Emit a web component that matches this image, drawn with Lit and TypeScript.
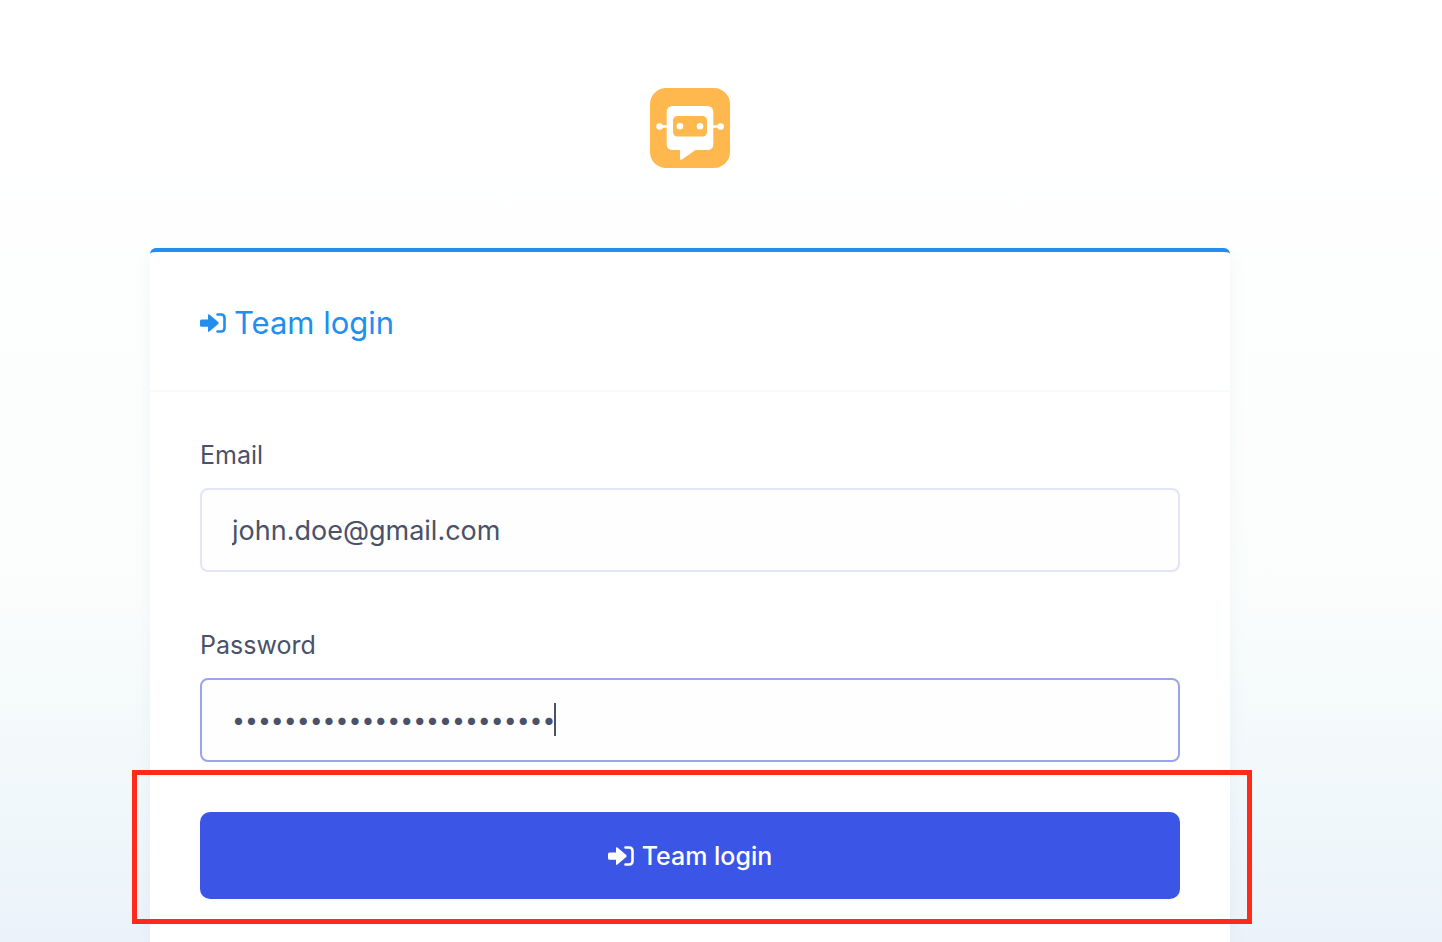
import { LitElement, html, css, svg } from "lit";
import { customElement } from "lit/decorators.js";

const loginIcon = html`<svg class="icon" viewBox="0 0 26 20" aria-hidden="true">
  ${svg`<path fill="currentColor" d="M1.5 6.5H8V2.2Q8 .6 9.4 1.6L18.2 9.1Q19.2 10 18.2 10.9L9.4 18.6Q8 19.6 8 18V13.8H1.5Q0 13.8 0 12.3V8Q0 6.5 1.5 6.5Z"/>
  <path fill="none" stroke="currentColor" stroke-width="2.6" stroke-linecap="round" d="M17.5 1.5H21Q24.5 1.5 24.5 5V15Q24.5 18.5 21 18.5H17.5"/>`}
</svg>`;

@customElement("app-root")
export class AppRoot extends LitElement {
  static styles = css`
    :host {
      display: block;
      font-family: Inter, sans-serif;
      color: #4a5168;
    }
    * { box-sizing: border-box; }
    .page {
      min-height: 100vh;
      display: flex;
      flex-direction: column;
      padding: 88px 212px 0 150px;
      background: linear-gradient(180deg, #ffffff 0, #fbfdfc 62%, #eff7fa 88%, #ecf2fa 100%);
    }
    .logo { display: block; flex: none; width: 80px; height: 80px; margin: 0 auto 80px; }
    .card {
      flex: 1;
      background: #fff;
      border-top: 4px solid #228ef0;
      border-radius: 6px 6px 0 0;
      box-shadow: 0 8px 16px rgba(150, 190, 210, 0.12);
    }
    .head {
      padding: 51px 50px 47px;
      border-bottom: 2px solid #f9fafb;
    }
    .title {
      display: flex;
      align-items: center;
      gap: 8px;
      margin: 0;
      font-size: 31px;
      line-height: 40px;
      font-weight: 400;
      color: #228ef0;
    }
    .icon { width: 26px; height: 20px; flex: none; }
    .form { padding: 47px 50px 42px; }
    .label { display: block; font-size: 25px; line-height: 32px; margin-bottom: 17px; }
    .field { position: relative; margin-bottom: 57px; }
    .field + .field { margin-bottom: 50px; }
    .control {
      display: block;
      width: 100%;
      height: 84px;
      padding: 0 30px;
      border: 2px solid #e2e4f8;
      border-radius: 8px;
      background: #fefefe;
      color: inherit;
      font: 400 27px/40px Inter, sans-serif;
      outline: none;
    }
    .active { border-color: #98a4ec; caret-color: transparent; font-size: 23px; }
    .caret { position: absolute; left: 354px; bottom: 26px; width: 2px; height: 33px; background: #4a5168; }
    .action { position: relative; }
    .button {
      display: flex;
      align-items: center;
      justify-content: center;
      gap: 8px;
      width: 100%;
      height: 87px;
      border: 0;
      border-radius: 10px;
      background: #3b55e6;
      color: #fff;
      font: 500 25px/32px Inter, sans-serif;
    }
    .highlight { position: absolute; inset: -42px -72px -25px -68px; border: 5px solid #ff291c; pointer-events: none; }
  `;

  render() {
    return html`<main class="page">
      <svg class="logo" viewBox="0 0 80 80" role="img" aria-label="Robot chat">
        <rect width="80" height="80" rx="16" fill="#ffb84d"/>
        <path d="M10 38.5H70" stroke="#fff" stroke-width="2.4"/>
        <circle cx="9.6" cy="38.5" r="3.3" fill="#fff"/>
        <circle cx="70.6" cy="38.5" r="3.3" fill="#fff"/>
        <path fill="#fff" d="M23 18H57Q63.3 18 63.3 24V56Q63.3 62 57 62H45.5L32 71.5Q30 72.5 30 70.5V62H23Q16.7 62 16.7 56V24Q16.7 18 23 18Z"/>
        <rect x="23" y="28" width="34" height="20.5" rx="4.5" fill="#ffb84d"/>
        <circle cx="30" cy="38.3" r="3.3" fill="#fff"/>
        <circle cx="50" cy="38.3" r="3.3" fill="#fff"/>
      </svg>
      <section class="card">
        <header class="head"><h1 class="title">${loginIcon}<span>Team login</span></h1></header>
        <form class="form" @submit=${(e: Event) => e.preventDefault()}>
          <div class="field">
            <label class="label" for="email">Email</label>
            <input class="control" id="email" type="email" value="john.doe@gmail.com" />
          </div>
          <div class="field">
            <label class="label" for="password">Password</label>
            <input class="control active" id="password" type="password" value="correct-horse-battery-sta" />
            <span class="caret"></span>
          </div>
          <div class="action">
            <button class="button" type="submit">${loginIcon}<span>Team login</span></button>
            <span class="highlight"></span>
          </div>
        </form>
      </section>
    </main>`;
  }
}
